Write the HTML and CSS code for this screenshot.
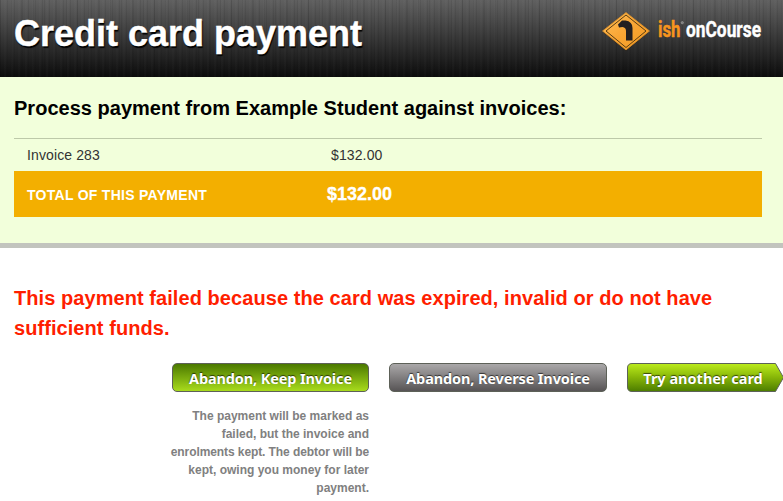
FILE: index.html
```
<!DOCTYPE html>
<html lang="en">
<head>
<meta charset="utf-8">
<title>Credit card payment</title>
<link rel="stylesheet" href="styles.css">
</head>
<body>
<header class="header">
  <h1 class="title">Credit card payment</h1>
  <svg class="logo" width="164" height="42" viewBox="601 10 164 42" role="img" aria-label="ish onCourse">
    <defs>
      <linearGradient id="sign" x1="0" y1="0" x2="1" y2="1">
        <stop offset="0" stop-color="#ffc05a"/>
        <stop offset=".5" stop-color="#f9a534"/>
        <stop offset="1" stop-color="#f39a20"/>
      </linearGradient>
    </defs>
    <path d="M626 14 649 32 626 51 603 32Z" fill="#111" opacity=".6"/>
    <path d="M626 12.500 649.500 31 626 50 602.500 31Z" fill="url(#sign)" stroke="#d58b28" stroke-width=".8" stroke-linejoin="round"/>
    <path d="M626 15 646 31 626 47.500 606 31Z" fill="none" stroke="#5a3c12" stroke-width="1"/>
    <path d="M618 24.500 622 20.500H625.500Q632.500 21.500 632.500 28V40.500H626V31Q626 27.500 622.500 27L619 27.500Z" fill="#231f20"/>
    <text class="brand-ish" x="658" y="37" textLength="22.500" lengthAdjust="spacingAndGlyphs">ish</text>
    <circle cx="682.300" cy="22.700" r="1.100" fill="#777" stroke="#aaa" stroke-width=".6"/>
    <text class="brand-name" x="686" y="37" textLength="75" lengthAdjust="spacingAndGlyphs">onCourse</text>
  </svg>
</header>
<section class="summary">
  <h2 class="heading">Process payment from Example Student against invoices:</h2>
  <div class="row"><span class="label">Invoice 283</span><span class="amount">$132.00</span></div>
  <div class="row total"><span class="label">TOTAL OF THIS PAYMENT</span><span class="amount">$132.00</span></div>
</section>
<main class="result">
  <p class="error">This payment failed because the card was expired, invalid or do not have sufficient funds.</p>
  <div class="actions">
    <div class="choice">
      <button class="button keep">Abandon, Keep Invoice</button>
      <p class="note">The payment will be marked as<br>failed, but the invoice and<br><span class="tight">enrolments kept. The debtor will be</span><br>kept, owing you money for later<br>payment.</p>
    </div>
    <button class="button reverse">Abandon, Reverse Invoice</button>
    <button class="button retry">
      <svg class="retry-shape" width="157" height="29" viewBox="0 0 157 29" aria-hidden="true">
        <defs>
          <linearGradient id="lime" x1="0" y1="0" x2="0" y2="1">
            <stop offset="0" stop-color="#bcec1c"/>
            <stop offset=".5" stop-color="#86b508"/>
            <stop offset="1" stop-color="#4c7c00"/>
          </linearGradient>
        </defs>
        <path d="M5 .5H148.500L156.500 14.500 148.500 28.500H5Q.5 28.500 .5 24V5Q.5 .5 5 .5Z" fill="url(#lime)" stroke="#5c6258"/>
      </svg>
      <span class="retry-label">Try another card</span>
    </button>
  </div>
</main>
</body>
</html>
```
FILE: styles.css
```
* { box-sizing: border-box; }
body {
  margin: 0;
  height: 501px;
  overflow: hidden;
  background: #fff;
  color: #333;
  font-family: "Liberation Sans", Arial, sans-serif;
}
h1, h2, p { margin: 0; }
.header {
  display: flex;
  justify-content: space-between;
  height: 77px;
  padding: 10px 18px 0 14px;
  background:
    repeating-linear-gradient(90deg, rgba(0,0,0,.07) 0 1px, transparent 1px 4px, rgba(255,255,255,.015) 4px 6px, transparent 6px 7px),
    repeating-linear-gradient(90deg, rgba(0,0,0,.07) 0 1px, transparent 1px 11px),
    linear-gradient(#606060, #0c0c0c);
}
.title {
  padding-top: 1px;
  color: #fff;
  font-size: 36px;
  line-height: 46px;
  white-space: nowrap;
  text-shadow: 1px 2px 1px #000;
  -webkit-text-stroke: .4px #fff;
}
.logo { display: block; }
.brand-ish, .brand-name {
  font-family: Roboto, sans-serif;
  font-size: 21.5px;
  font-weight: 700;
  stroke-width: .4px;
}
.brand-ish { fill: #f7941e; stroke: #f7941e; }
.brand-name { fill: #fff; stroke: #fff; }
.summary {
  height: 171px;
  padding: 16px 21px 0 14px;
  background: #f2ffdb;
  border-bottom: 5px solid #c2c4be;
}
.heading {
  height: 45px;
  color: #000;
  font-size: 20px;
  letter-spacing: .02px;
  line-height: 30px;
  white-space: nowrap;
}
.row {
  display: grid;
  grid-template-columns: 304px 1fr;
  align-items: center;
  height: 33px;
  padding-left: 13px;
  border-top: 1px solid #bdc9a9;
  font-size: 14px;
  letter-spacing: .12px;
}
.total {
  grid-template-columns: 300px 1fr;
  height: 46px;
  border: 0;
  background: #f3af00;
  color: #fff;
  font-weight: 700;
}
.total .label { padding-top: 2px; letter-spacing: .28px; }
.total .amount { font-size: 18px; letter-spacing: 0; -webkit-text-stroke: .3px #fff; }
.result { padding: 35px 14px 0; }
.error {
  color: #ff1e00;
  font-size: 20px;
  font-weight: 700;
  letter-spacing: .065px;
  line-height: 30px;
}
.actions {
  display: flex;
  align-items: flex-start;
  gap: 20px;
  width: 770px;
  margin-top: 20px;
  padding-left: 156px;
}
.choice { width: 199px; flex: none; }
.button {
  display: block;
  flex: none;
  height: 29px;
  padding: 1px 0 0;
  border: 1px solid #5d6158;
  border-radius: 5px;
  color: #fff;
  font: 700 14.5px/26px "Noto Sans", sans-serif;
  letter-spacing: -.13px;
  text-align: center;
  text-shadow: 0 -1px 1px rgba(0,0,0,.65);
  white-space: nowrap;
}
.keep {
  width: 197px;
  margin-left: 2px;
  background: linear-gradient(#4b7900, #a8db1c);
}
.reverse {
  width: 218px;
  background: linear-gradient(#aaa8a9, #575455);
}
.retry {
  display: grid;
  width: 157px;
  padding: 0;
  border: 0;
  background: none;
}
.retry-shape, .retry-label { grid-area: 1 / 1; }
.retry-shape { display: block; }
.retry-label { padding: 2px 5px 0 0; letter-spacing: 0; }
.note {
  margin-top: 15px;
  color: #808080;
  font-size: 12px;
  font-weight: 700;
  line-height: 18px;
  text-align: right;
  white-space: nowrap;
}
.tight { letter-spacing: -.09px; }
```
